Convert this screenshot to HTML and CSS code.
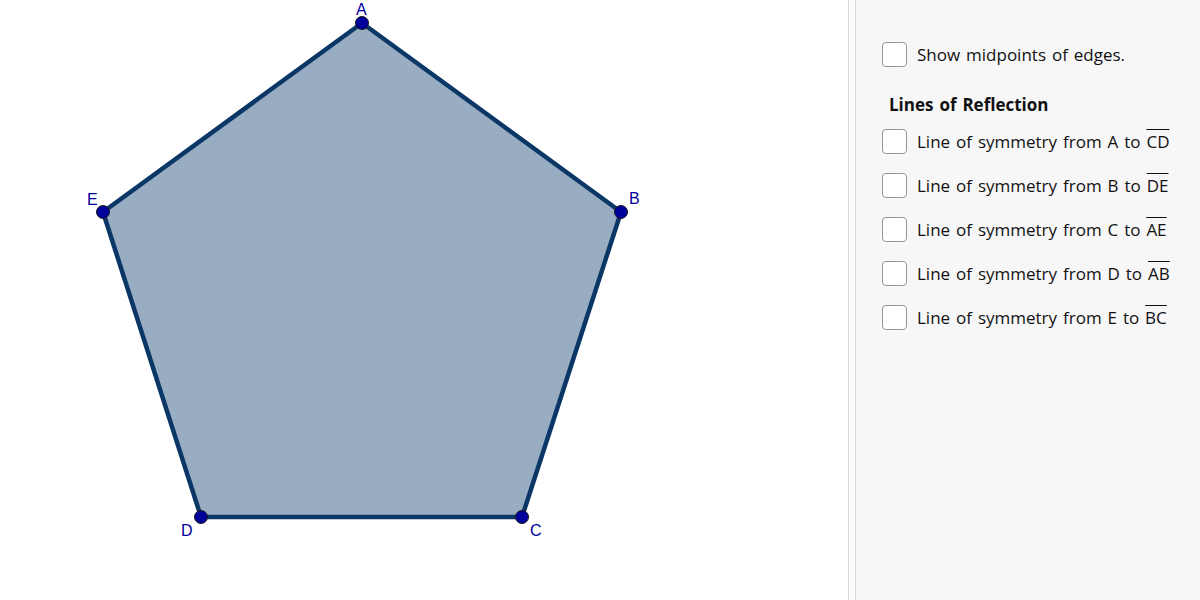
FILE: index.html
```html
<!DOCTYPE html>
<html>
<head>
<meta charset="utf-8">
<link rel="stylesheet" href="styles.css">
</head>
<body>
<div class="app">
  <div class="canvas">
    <svg width="848" height="600" viewBox="0 0 848 600" xmlns="http://www.w3.org/2000/svg">
      <polygon points="362,23 621,212 522,517 201,517 103,212" fill="#99adc2" stroke="#0b3767" stroke-width="4.5" stroke-linejoin="round"/>
      <g fill="#00009a" stroke="#1a1a1a" stroke-width="1">
        <circle cx="362" cy="23" r="6.5"/>
        <circle cx="621" cy="212" r="6.5"/>
        <circle cx="522" cy="517" r="6.5"/>
        <circle cx="201" cy="517" r="6.5"/>
        <circle cx="103" cy="212" r="6.5"/>
      </g>
      <g class="lbl" fill="#00009a">
        <text x="356" y="15">A</text>
        <text x="629" y="204">B</text>
        <text x="530" y="536">C</text>
        <text x="181" y="536">D</text>
        <text x="87" y="205">E</text>
      </g>
    </svg>
  </div>
  <div class="divider"></div>
  <div class="panel">
    <div class="row first"><span class="box"></span><span class="txt">Show midpoints of edges.</span></div>
    <div class="heading">Lines of Reflection</div>
    <div class="row"><span class="box"></span><span class="txt">Line of symmetry from A to <span class="ov">CD</span></span></div>
    <div class="row"><span class="box"></span><span class="txt">Line of symmetry from B to <span class="ov">DE</span></span></div>
    <div class="row"><span class="box"></span><span class="txt">Line of symmetry from C to <span class="ov">AE</span></span></div>
    <div class="row"><span class="box"></span><span class="txt">Line of symmetry from D to <span class="ov">AB</span></span></div>
    <div class="row"><span class="box"></span><span class="txt">Line of symmetry from E to <span class="ov">BC</span></span></div>
  </div>
</div>
</body>
</html>
```

FILE: styles.css
```css
html, body {
  margin: 0;
  padding: 0;
  background: #ffffff;
}
.app {
  display: flex;
  width: 1200px;
  height: 600px;
  overflow: hidden;
}
.canvas {
  width: 848px;
  height: 600px;
  flex: none;
  background: #ffffff;
}
.canvas svg {
  display: block;
}
.lbl text {
  font-family: "Liberation Sans", Arial, sans-serif;
  font-size: 16px;
}
.divider {
  width: 6px;
  flex: none;
  background: #fbfafb;
  border-left: 1px solid #d9d9d9;
  border-right: 1px solid #d9d9d9;
}
.panel {
  flex: 1;
  background: #f8f7f8;
  padding: 32px 0 0 26px;
  font-family: "Open Sans", sans-serif;
  font-size: 17px;
  word-spacing: 1.5px;
  color: #111111;
}
.row {
  display: flex;
  align-items: center;
  height: 44px;
  gap: 10px;
}
.box {
  width: 23px;
  height: 23px;
  flex: none;
  background: #ffffff;
  border: 1.5px solid #959595;
  border-radius: 4px;
}
.heading {
  font-weight: bold;
  height: 24px;
  line-height: 24px;
  margin: 17px 0 2px 7px;
}
.ov {
  text-decoration: overline;
  text-decoration-thickness: 1px;
}
```
